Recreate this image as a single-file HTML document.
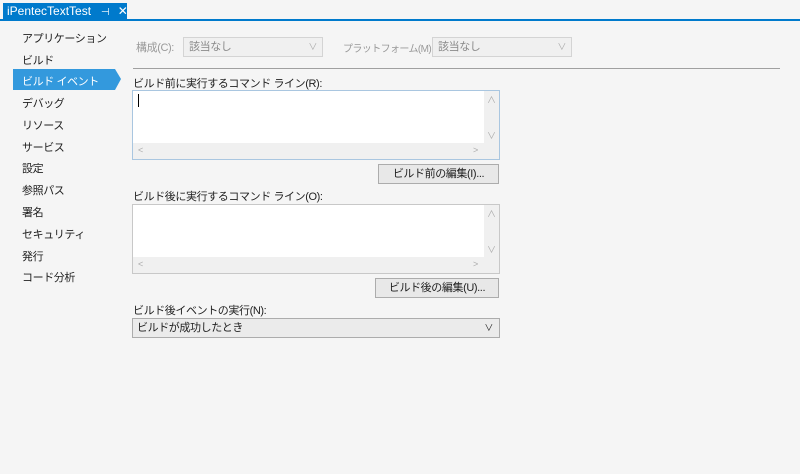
<!DOCTYPE html><html><head><style>
body{margin:0;width:800px;height:474px;background:#f5f5f5;font-family:"Liberation Sans","Noto Sans CJK JP",sans-serif;font-size:11px;color:#1e1e1e;position:relative;overflow:hidden;letter-spacing:-0.4px}
.a{position:absolute;white-space:nowrap}
.tab{left:3px;top:3px;width:124px;height:17px;background:#007acc;color:#fff;font-size:12px;line-height:17px;letter-spacing:0}
.side{left:22px}
.box{background:#fff;border:1px solid #a9c6e0;box-sizing:border-box}
.btn{background:#e8e8e8;border:1px solid #acacac;box-sizing:border-box;text-align:center;line-height:18px}
.dd{background:#f0f0f0;border:1px solid #d4d4d4;box-sizing:border-box;color:#8a8a8a;line-height:18px;padding-left:5px}
.ar{color:#aaa;font-size:9px}
</style></head><body>
<div class="a" style="left:0;top:19px;width:800px;height:2px;background:#007acc"></div>
<div class="a tab"><span style="margin-left:4px">iPentecTextTest</span><span style="margin-left:10px;font-size:10px">⊣</span><span style="margin-left:8px">✕</span></div>
<div class="a side" style="top:30px">アプリケーション</div>
<div class="a side" style="top:52px">ビルド</div>
<div class="a" style="left:13px;top:69px;width:102px;height:21px;background:#3399dd"></div>
<div class="a" style="left:115px;top:69px;width:0;height:0;border-top:10px solid transparent;border-bottom:11px solid transparent;border-left:6px solid #3399dd"></div>
<div class="a side" style="top:73px;color:#fff">ビルド イベント</div>
<div class="a side" style="top:95px">デバッグ</div>
<div class="a side" style="top:117px">リソース</div>
<div class="a side" style="top:139px">サービス</div>
<div class="a side" style="top:160px">設定</div>
<div class="a side" style="top:182px">参照パス</div>
<div class="a side" style="top:204px">署名</div>
<div class="a side" style="top:226px">セキュリティ</div>
<div class="a side" style="top:248px">発行</div>
<div class="a side" style="top:269px">コード分析</div>
<div class="a" style="left:136px;top:39px;color:#999">構成(C):</div>
<div class="a dd" style="left:183px;top:37px;width:140px;height:20px">該当なし<span class="a ar" style="right:5px;top:0">∨</span></div>
<div class="a" style="left:343px;top:40px;color:#999;letter-spacing:-0.6px;font-size:10px">プラットフォーム(M):</div>
<div class="a dd" style="left:432px;top:37px;width:140px;height:20px">該当なし<span class="a ar" style="right:5px;top:0">∨</span></div>
<div class="a" style="left:133px;top:68px;width:647px;height:1px;background:#a0a0a0"></div>
<div class="a" style="left:133px;top:75px">ビルド前に実行するコマンド ライン(R):</div>
<div class="a box" style="left:132px;top:90px;width:368px;height:70px">
<div class="a" style="left:5px;top:3px;width:1px;height:13px;background:#000"></div>
<div class="a" style="left:0;top:52px;width:366px;height:16px;background:#f0f0f0"></div>
<div class="a" style="left:351px;top:0;width:15px;height:68px;background:#f0f0f0"></div>
<span class="a ar" style="left:354px;top:2px">∧</span><span class="a ar" style="left:354px;top:38px">∨</span>
<span class="a ar" style="left:5px;top:54px">&lt;</span><span class="a ar" style="left:340px;top:54px">&gt;</span></div>
<div class="a btn" style="left:378px;top:164px;width:121px;height:20px">ビルド前の編集(I)...</div>
<div class="a" style="left:133px;top:188px">ビルド後に実行するコマンド ライン(O):</div>
<div class="a box" style="left:132px;top:204px;width:368px;height:70px;border-color:#c8c8c8">
<div class="a" style="left:0;top:52px;width:366px;height:16px;background:#f0f0f0"></div>
<div class="a" style="left:351px;top:0;width:15px;height:68px;background:#f0f0f0"></div>
<span class="a ar" style="left:354px;top:2px">∧</span><span class="a ar" style="left:354px;top:38px">∨</span>
<span class="a ar" style="left:5px;top:54px">&lt;</span><span class="a ar" style="left:340px;top:54px">&gt;</span></div>
<div class="a btn" style="left:375px;top:278px;width:124px;height:20px">ビルド後の編集(U)...</div>
<div class="a" style="left:133px;top:302px">ビルド後イベントの実行(N):</div>
<div class="a btn" style="left:132px;top:318px;width:368px;height:20px;text-align:left;padding-left:4px;background:#ebebeb">ビルドが成功したとき<span class="a" style="right:6px;top:0;font-size:9px">∨</span></div>
</body></html>
